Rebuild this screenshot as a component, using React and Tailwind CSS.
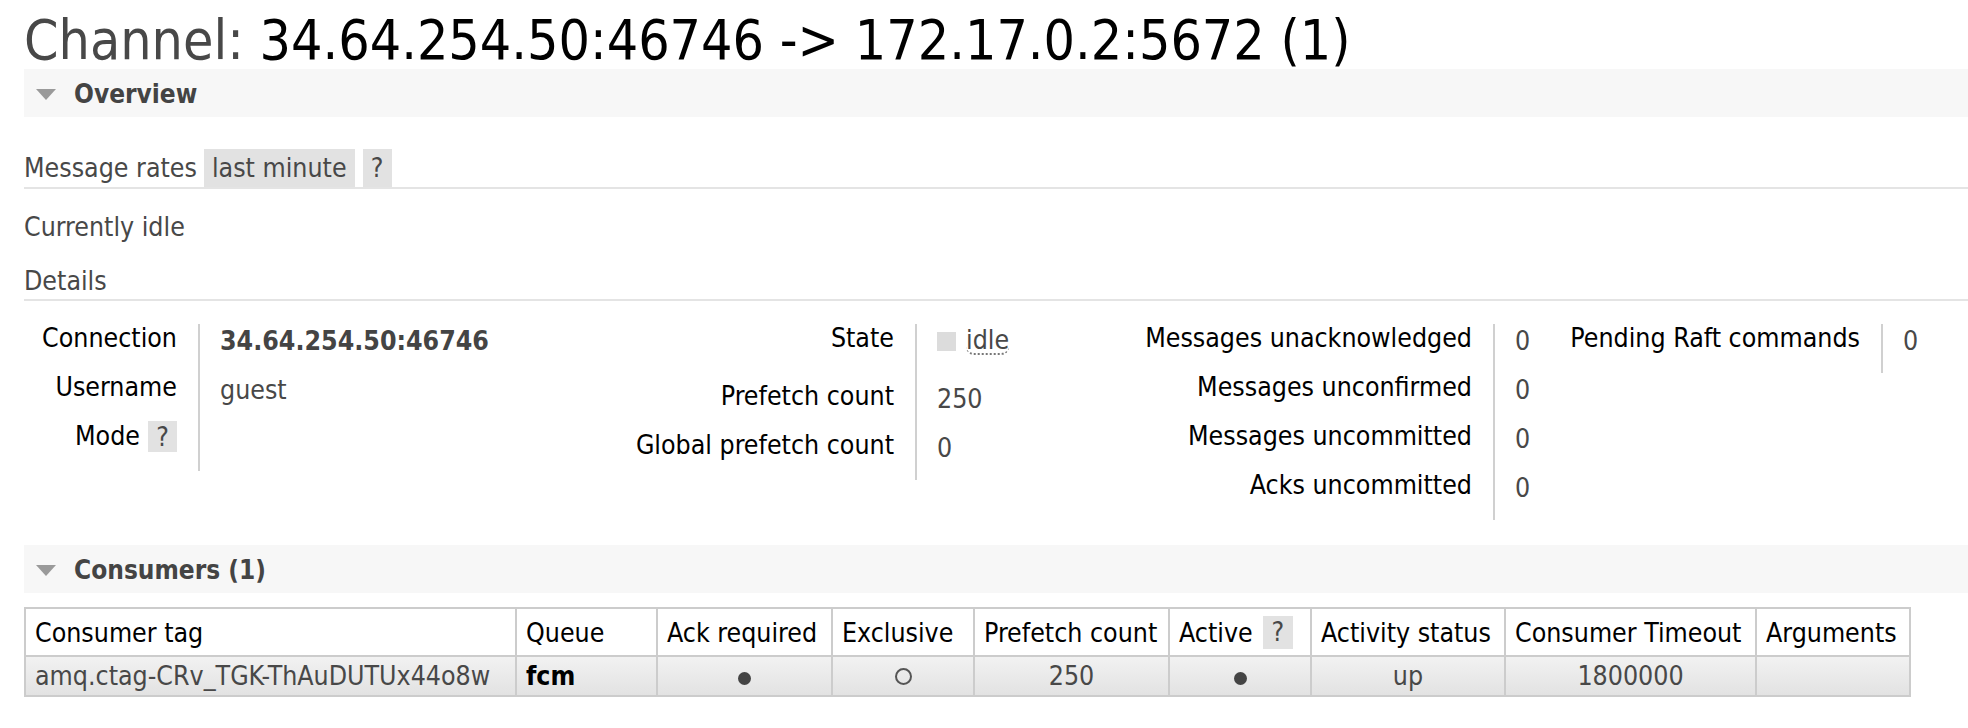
const font = "font-['DejaVu_Sans_Condensed','DejaVu_Sans',sans-serif] font-stretch-condensed";

function SectionBar({ title }) {
  return (
    <div className="flex h-[48px] items-center bg-[#f7f7f7]">
      <svg width="20" height="11" viewBox="0 0 20 11" className="mt-[2px] ml-[12px] mr-[18px]">
        <path d="M0 0H20L10 11Z" fill="#9a9a9a" />
      </svg>
      <span className="pt-[2px] text-[26px] font-bold text-[#444]">{title}</span>
    </div>
  );
}

function Help({ className = "" }) {
  return (
    <span className={`inline-flex items-center justify-center bg-[#e2e2e2] text-[#484848] ${className}`}>?</span>
  );
}

function Facts({ labelWidth, valueWidth, rows }) {
  return (
    <div className="flex items-start">
      <div style={{ width: labelWidth }} className="shrink-0">
        {rows.map((row) => (
          <div
            key={row.label}
            className={`flex justify-end pr-[21px] leading-[28px] whitespace-nowrap text-black ${row.tall ? "h-[58px]" : "h-[49px]"}`}
          >
            {row.labelNode || row.label}
          </div>
        ))}
      </div>
      <div style={{ width: valueWidth }} className="shrink-0 border-l-2 border-[#d0d0d0] pl-[20px]">
        {rows.map((row) => (
          <div
            key={row.label}
            className={`pt-[3px] leading-[28px] whitespace-nowrap text-[#484848] ${row.tall ? "h-[58px]" : "h-[49px]"}`}
          >
            {row.value}
          </div>
        ))}
      </div>
    </div>
  );
}

const columns = [
  { label: "Consumer tag", width: 491 },
  { label: "Queue", width: 141 },
  { label: "Ack required", width: 175 },
  { label: "Exclusive", width: 142 },
  { label: "Prefetch count", width: 195 },
  { label: "Active", width: 142, help: true },
  { label: "Activity status", width: 194 },
  { label: "Consumer Timeout", width: 251 },
  { label: "Arguments", width: 154 },
];

const filledDot = <span className="inline-block h-[13px] w-[13px] rounded-full bg-[#444]" />;
const hollowDot = <span className="inline-block h-[17px] w-[17px] rounded-full border-2 border-[#555]" />;

export default function App() {
  return (
    <div className={`${font} min-h-[728px] w-[1968px] bg-white pl-[24px] text-[26.5px] text-[#484848]`}>
      <h1 className="pt-[12px] text-[55px] leading-[57px] font-normal">
        <span className="text-[#484848]">Channel: </span>
        <span className="text-black">34.64.254.50:46746 -&gt; 172.17.0.2:5672 (1)</span>
      </h1>

      <SectionBar title="Overview" />

      <div className="mt-[32px] flex h-[40px] border-b-2 border-[#e4e4e4]">
        <span className="self-center">Message rates</span>
        <span className="ml-[7px] flex h-[38px] items-center bg-[#e2e2e2] px-[8px]">last minute</span>
        <Help className="ml-[8px] h-[38px] w-[29px]" />
      </div>

      <div className="mt-[23px] leading-[30px]">Currently idle</div>

      <div className="mt-[23px] border-b-2 border-[#e4e4e4] pt-[1px] pb-[3px] leading-[30px]">Details</div>

      <div className="mt-[23px] flex items-start">
        <Facts
          labelWidth={174}
          valueWidth={402}
          rows={[
            { label: "Connection", value: <b className="font-bold text-[#444]">34.64.254.50:46746</b> },
            { label: "Username", value: "guest" },
            {
              label: "Mode",
              labelNode: (
                <span className="flex items-start">
                  Mode
                  <Help className="ml-[8px] -mt-[1px] h-[31px] w-[29px]" />
                </span>
              ),
              value: "",
            },
          ]}
        />
        <Facts
          labelWidth={315}
          valueWidth={235}
          rows={[
            {
              label: "State",
              tall: true,
              value: (
                <span className="flex items-center">
                  <span className="mr-[10px] inline-block h-[19px] w-[19px] bg-[#dcdcdc]" />
                  <span className="rounded-b-[8px] border-b-2 border-dotted border-[#777] leading-[26px]">idle</span>
                </span>
              ),
            },
            { label: "Prefetch count", value: "250" },
            { label: "Global prefetch count", value: "0" },
          ]}
        />
        <Facts
          labelWidth={343}
          valueWidth={47}
          rows={[
            { label: "Messages unacknowledged", value: "0" },
            { label: "Messages unconfirmed", value: "0" },
            { label: "Messages uncommitted", value: "0" },
            { label: "Acks uncommitted", value: "0" },
          ]}
        />
        <Facts
          labelWidth={341}
          valueWidth={60}
          rows={[{ label: "Pending Raft commands", value: "0" }]}
        />
      </div>

      <div className="mt-[25px]">
        <SectionBar title="Consumers (1)" />
      </div>

      <table className="mt-[14px] border-collapse">
        <thead>
          <tr className="h-[48px]">
            {columns.map((col) => (
              <th
                key={col.label}
                style={{ width: col.width }}
                className="border-2 border-[#cccccc] px-[9px] pt-[2px] text-left font-normal whitespace-nowrap text-black"
              >
                {col.help ? (
                  <span className="flex items-center">
                    {col.label}
                    <Help className="ml-[10px] -mt-[2px] h-[33px] w-[30px]" />
                  </span>
                ) : (
                  col.label
                )}
              </th>
            ))}
          </tr>
        </thead>
        <tbody>
          <tr className="h-[40px] bg-gradient-to-b from-[#f2f2f2] to-[#e2e2e2] leading-[34px]">
            <td className="border-2 border-[#cccccc] px-[9px] whitespace-nowrap">amq.ctag-CRv_TGK-ThAuDUTUx44o8w</td>
            <td className="border-2 border-[#cccccc] px-[9px] font-bold text-black">fcm</td>
            <td className="border-2 border-[#cccccc] text-center">{filledDot}</td>
            <td className="border-2 border-[#cccccc] text-center">{hollowDot}</td>
            <td className="border-2 border-[#cccccc] text-center">250</td>
            <td className="border-2 border-[#cccccc] text-center">{filledDot}</td>
            <td className="border-2 border-[#cccccc] text-center">up</td>
            <td className="border-2 border-[#cccccc] text-center">1800000</td>
            <td className="border-2 border-[#cccccc]"></td>
          </tr>
        </tbody>
      </table>
    </div>
  );
}
